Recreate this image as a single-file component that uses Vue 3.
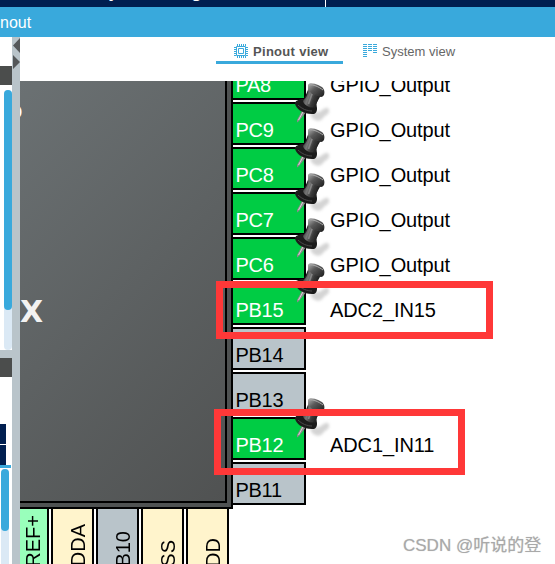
<script setup>
const pins = [
  { name: 'PA8', label: 'GPIO_Output', on: true, tack: false },
  { name: 'PC9', label: 'GPIO_Output', on: true, tack: true },
  { name: 'PC8', label: 'GPIO_Output', on: true, tack: true },
  { name: 'PC7', label: 'GPIO_Output', on: true, tack: true },
  { name: 'PC6', label: 'GPIO_Output', on: true, tack: true },
  { name: 'PB15', label: 'ADC2_IN15', on: true, tack: true },
  { name: 'PB14', label: '', on: false, tack: false },
  { name: 'PB13', label: '', on: false, tack: false },
  { name: 'PB12', label: 'ADC1_IN11', on: true, tack: true },
  { name: 'PB11', label: '', on: false, tack: false }
]
const bottomPins = [
  { name: 'VREF+', kind: 'mint' },
  { name: 'VDDA', kind: 'cream' },
  { name: 'PB10', kind: 'grey' },
  { name: 'VSS', kind: 'cream' },
  { name: 'VDD', kind: 'cream' }
]
const columns = [[0, 7], [5, 4], [10, 5]]
</script>

<template>
  <div class="window">
    <svg width="0" height="0" class="defs">
      <defs>
        <linearGradient id="tackBody" x1="0" y1="0" x2="1" y2="0.4">
          <stop offset="0" stop-color="#161616" />
          <stop offset=".4" stop-color="#777" />
          <stop offset=".65" stop-color="#3a3a3a" />
          <stop offset="1" stop-color="#181818" />
        </linearGradient>
        <linearGradient id="tackHead" x1="0" y1="0" x2="1" y2="1">
          <stop offset="0" stop-color="#b5b5b5" />
          <stop offset=".4" stop-color="#5a5a5a" />
          <stop offset="1" stop-color="#1c1c1c" />
        </linearGradient>
        <filter id="soft" x="-30%" y="-30%" width="160%" height="160%"><feGaussianBlur stdDeviation="1.5" /></filter>
        <filter id="edge"><feGaussianBlur stdDeviation="0.5" /></filter>
      </defs>
    </svg>

    <header class="menu"><span>Project Manager</span><i></i></header>
    <div class="crumb">nout</div>
    <div class="body">
      <aside class="side">
        <div class="s-head"></div>
        <div class="s-track one"><i></i></div>
        <div class="s-sep"></div>
        <div class="s-head low"></div>
        <div class="s-rows"><i></i><i></i></div>
        <div class="s-line"></div>
        <div class="s-track two"><i></i></div>
      </aside>
      <div class="splitter">
        <svg width="8" height="32" viewBox="0 0 8 32"><path d="M8 0V15L1 7.5ZM1 17V31L8 24Z" fill="#55585a" /></svg>
      </div>
      <main class="main">
        <nav class="tabs">
          <div class="tab active">
            <svg width="14" height="14" viewBox="0 0 14 14" fill="none" stroke="#39a9dc">
              <path d="M2.5 2.5h9v9h-9ZM4.5 4.5h5v5h-5Z" />
              <path d="M3.5 0v2M5.5 0v2M7.5 0v2M9.5 0v2M11.5 0v2M3.5 12v2M5.5 12v2M7.5 12v2M9.5 12v2M11.5 12v2M0 3.5h2M0 5.5h2M0 7.5h2M0 9.5h2M0 11.5h2M12 3.5h2M12 5.5h2M12 7.5h2M12 9.5h2M12 11.5h2" />
            </svg>
            <span>Pinout view</span>
          </div>
          <div class="tab plain">
            <svg width="14" height="14" viewBox="0 0 14 14">
              <g v-for="c in columns" :key="c[0]">
                <rect v-for="n in c[1]" :key="n" :x="c[0]" :y="n * 2 - 2" width="4" height="1" fill="#39a9dc" />
              </g>
            </svg>
            <span>System view</span>
          </div>
        </nav>
        <div class="canvas">
          <div class="upper">
            <div class="chip">
              <div class="die"><b class="mark">X</b><b class="mark tail">o</b></div>
            </div>
            <div class="pins">
              <div v-for="p in pins" :key="p.name" class="row">
                <div class="pin" :class="{ on: p.on }">{{ p.name }}</div>
                <span class="label">{{ p.label }}</span>
                <svg v-if="p.tack" class="tack" width="46" height="46" viewBox="0 0 46 46">
                  <path d="M20 33C24 31 28 34 32 30C35 28 38 26 39 30C40 34 35 35 33 38C30 42 26 41 22 38Z" fill="#888" opacity=".36" filter="url(#soft)" />
                  <g filter="url(#edge)">
                    <path d="M13 29L7 40L7 42.500L9 41L17 31Z" fill="#8b8b8b" />
                    <path d="M13.500 31L8.500 40" stroke="#ddd" stroke-width=".9" />
                    <path d="M5 23C6 20 10 19 14 19L18 10L31 15L26 24C28 29 27 33 24 34C15 35 5 29 5 23Z" fill="#1e1e1e" />
                    <path d="M18 9L32 14C28 17 27 22 26 27C20 29 14 25 13 21C16 18 18 15 18 9Z" fill="url(#tackBody)" />
                    <path d="M18 5C19 1 32 5 34 10C35 13 34 17 31 17C25 16 18 12 18 9Z" fill="url(#tackHead)" />
                    <path d="M19 5C23 4 29 7 33 10" stroke="#aaa" stroke-width="1" fill="none" />
                    <path d="M22 14L18.500 24" stroke="#999" stroke-width="1.600" opacity=".65" />
                    <path d="M8 25C12 29 17 31 22 31" stroke="#484848" stroke-width="1" fill="none" />
                  </g>
                </svg>
              </div>
            </div>
          </div>
          <div class="bottom">
            <div v-for="p in bottomPins" :key="p.name" class="vpin" :class="p.kind"><span>{{ p.name }}</span></div>
          </div>
        </div>
      </main>
    </div>
    <div class="mark-box first"></div>
    <div class="mark-box second"></div>
    <div class="credit">CSDN @听说的登</div>
  </div>
</template>

<style>
body { margin: 0; background: #fff; overflow: hidden; }
</style>

<style scoped>
* { box-sizing: border-box; }
.window { position: relative; width: 555px; height: 564px; overflow: hidden; display: flex; flex-direction: column; background: #fff; font-family: "Liberation Sans", Arial, sans-serif; }
.defs { position: absolute; }
.menu { height: 7px; flex: none; background: #001f50; overflow: hidden; display: flex; color: #fff; font-weight: bold; font-size: 17px; }
.menu span { width: 325px; padding-left: 80px; line-height: 20px; margin-top: -17px; flex: none; white-space: nowrap; letter-spacing: .45px; }
.menu i { width: 1px; height: 7px; background: #fff; }
.crumb { height: 30px; flex: none; background: #39a9dc; color: #fff; font-size: 16px; line-height: 31px; }
.body { flex: 1; min-height: 0; display: flex; }
.side { width: 12px; flex: none; padding-top: 29px; overflow: hidden; }
.s-head { height: 19px; background: #4b4d4c; }
.s-track { background: #dbe9f5; border-radius: 4px; width: 8px; }
.s-track i { display: block; background: #39a9dc; border-radius: 4px; }
.one { height: 260px; margin: 5px 0 0 4px; }
.one i { height: 220px; }
.s-sep { height: 8px; background: #b9c4ca; }
.s-head.low { height: 19px; }
.s-rows { margin-top: 47px; display: flex; flex-direction: column; gap: 1px; }
.s-rows i { width: 6px; height: 20px; background: #001f50; }
.s-line { width: 11px; height: 3px; background: #39a9dc; }
.two { height: 110px; margin: 1px 0 0 1px; }
.two i { height: 62px; }
.splitter { width: 8px; flex: none; background: #b9c4ca; padding-top: 1px; }
.splitter svg { display: block; }
.main { flex: 1; min-width: 0; display: flex; flex-direction: column; }
.tabs { height: 44px; flex: none; display: flex; gap: 20px; padding-left: 196px; }
.tab { height: 27px; display: flex; align-items: flex-start; padding-top: 7px; gap: 5px; font-size: 13px; line-height: 15px; color: #666; white-space: nowrap; }
.tab.active { width: 127px; padding-left: 18px; border-bottom: 3px solid #39a9dc; font-weight: bold; color: #555; letter-spacing: .3px; }
.tab.plain { letter-spacing: .02px; }
.tab svg { flex: none; }
.canvas { flex: 1; min-height: 0; overflow: hidden; }
.upper { display: flex; height: 428px; }
.chip { width: 213px; flex: none; background: #4f5252; border: solid #000; border-width: 0 2px 2px 0; padding: 0 4px 4px 0; }
.die { height: 422px; position: relative; border: solid #000; border-width: 0 2px 2px 0; background: linear-gradient(135deg, #6b7173 0%, #505252 100%); overflow: hidden; }
.mark { position: absolute; left: 0; top: 213px; color: #f2f2f2; font: bold 30px/36px "DejaVu Sans", sans-serif; }
.mark.tail { left: -14px; top: 18px; font-size: 24px; line-height: 24px; color: #fff; }
.pins { flex: 1; margin-top: -24px; display: flex; flex-direction: column; gap: 2px; clip-path: inset(24px 0 -10px -4px); }
.row { height: 43px; flex: none; display: flex; gap: 24px; position: relative; font-size: 20px; line-height: 20px; letter-spacing: -.1px; }
.pin { width: 73px; height: 43px; border: 2px solid #000; border-left: 0; background: #b9c4ca; padding: 16px 0 0 2.5px; color: #000; letter-spacing: -.3px; }
.pin.on { background: #00cc44; color: #fff; }
.label { padding-top: 18px; color: #000; }
.tack { position: absolute; left: 57px; top: -22px; }
.bottom { display: flex; gap: 2px; margin-left: -14px; }
.vpin { width: 43px; height: 75px; border: 2px solid #000; border-top: 0; display: flex; align-items: flex-end; justify-content: center; padding-bottom: 2px; font-size: 20px; line-height: 20px; }
.vpin span { writing-mode: vertical-rl; transform: rotate(180deg); margin-left: 11px; }
.mint { background: #99ffbb; }
.cream { background: #fff4cc; }
.grey { background: #b9c4ca; }
.mark-box { position: absolute; border: 7px solid #ff3838; }
.first { left: 216px; top: 281px; width: 277px; height: 58px; }
.second { left: 214px; top: 409px; width: 251px; height: 66px; }
.credit { position: absolute; left: 403px; top: 534px; font: 17px/24px "Liberation Sans", "Noto Sans CJK SC", sans-serif; color: #a9a9a9; white-space: nowrap; text-shadow: 0 0 1px #ccc; }
</style>
